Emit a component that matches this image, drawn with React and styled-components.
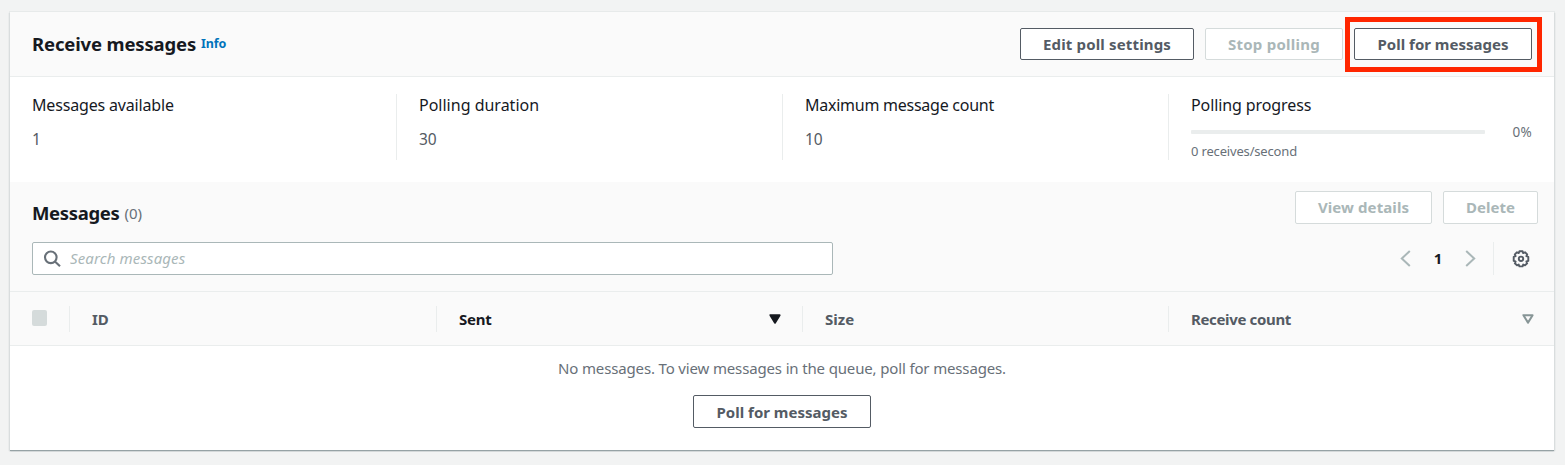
import React from "react";
import styled, { createGlobalStyle, css } from "styled-components";

const GlobalStyle = createGlobalStyle`
  *, *::before, *::after { box-sizing: border-box; }
  body {
    margin: 0;
    background: #f2f3f3;
    font-family: "Noto Sans", "Open Sans", sans-serif;
    font-size: 15px;
    color: #16191f;
  }
  h2, p { margin: 0; }
`;

const Page = styled.main`
  height: 465px;
  padding: 12px 11px 15px 10px;
`;

const Panel = styled.section`
  display: flex;
  flex-direction: column;
  height: 438px;
  background: #fff;
  box-shadow: 0 1px 1px 0 rgba(0, 28, 36, 0.35), 0 0 0 1px #e7eaea,
    0 1px 0 0 #879596, 1px 1px 1px 0 rgba(0, 28, 36, 0.2),
    -1px 1px 1px 0 rgba(0, 28, 36, 0.2);
`;

const PanelHeader = styled.header`
  display: flex;
  align-items: center;
  justify-content: space-between;
  height: 65px;
  padding: 0 22px;
  background: #fafafa;
  border-bottom: 1px solid #eaeded;
`;

const TitleGroup = styled.div`
  display: flex;
  align-items: baseline;
  gap: 5px;
`;

const Title = styled.h2`
  font-size: 18.5px;
  font-weight: 700;
  line-height: 24px;
  letter-spacing: ${(p) => p.$tracking}px;
`;

const InfoLink = styled.a`
  position: relative;
  top: -3px;
  color: #0073bb;
  font-size: 12.5px;
  font-weight: 700;
  letter-spacing: -0.15px;
`;

const Counter = styled.span`
  color: #687078;
  font-size: 15px;
`;

const ButtonRow = styled.div`
  display: flex;
  gap: 11px;
`;

const Button = styled.button`
  width: ${(p) => p.$width}px;
  height: ${(p) => (p.$tall ? 33 : 32)}px;
  padding: ${(p) => (p.$tall && p.disabled ? "0 0 1px" : "0")};
  background: #fff;
  border: 1px solid #545b64;
  border-radius: 2px;
  color: #545b64;
  font: 700 15px/20px "Noto Sans", "Open Sans", sans-serif;
  letter-spacing: ${(p) => p.$tracking || 0}px;
  white-space: nowrap;
  &:disabled {
    border-color: #d5dbdb;
    color: #aab7b8;
  }
`;

const Highlight = styled.div`
  position: relative;
  display: flex;
  &::after {
    content: "";
    position: absolute;
    inset: -11px -10px -12px -9px;
    border: 5px solid #ff2600;
    pointer-events: none;
  }
`;

const Stats = styled.div`
  display: grid;
  grid-template-columns: repeat(4, 386px);
  height: 105px;
  padding-top: 17px;
`;

const Stat = styled.div`
  height: 66px;
  padding: 0 22px;
  & + & {
    border-left: 1px solid #eaeded;
  }
`;

const StatLabel = styled.p`
  font-size: 16px;
  line-height: 22px;
  letter-spacing: ${(p) => p.$tracking}px;
`;

const StatValue = styled.p`
  margin-top: 12px;
  color: #545b64;
  font-size: 15.5px;
  line-height: 22px;
`;

const Progress = styled.div`
  display: flex;
  align-items: center;
  justify-content: space-between;
  height: 20px;
  margin-top: 6px;
  color: #687078;
  font-size: 13.5px;
  letter-spacing: 0.3px;
`;

const ProgressTrack = styled.div`
  width: 294px;
  height: 4px;
  border-radius: 1px;
  background: #eaeded;
`;

const ProgressNote = styled.p`
  color: #687078;
  font-size: 13px;
  line-height: 18px;
  letter-spacing: -0.17px;
`;

const TableTools = styled.div`
  height: 110px;
  padding: 9px 16px 0 22px;
  background: #fafafa;
  border-bottom: 1px solid #eaeded;
`;

const ToolRow = styled.div`
  display: flex;
  align-items: center;
  justify-content: space-between;
  height: 33px;
  & + & {
    margin-top: 18px;
  }
`;

const TableTitle = styled(TitleGroup)`
  padding-top: 11px;
`;

const TableCounter = styled(Counter)`
  position: relative;
  top: -1px;
`;

const SearchBox = styled.label`
  display: flex;
  align-items: center;
  gap: 9px;
  width: 801px;
  height: 33px;
  padding-left: 10px;
  background: #fff;
  border: 1px solid #aab7b8;
  border-radius: 2px;
`;

const SearchInput = styled.input`
  flex: 1;
  padding: 0 0 2px;
  border: 0;
  outline: 0;
  background: none;
  font: italic 400 15px/20px "Noto Sans", "Open Sans", sans-serif;
  letter-spacing: 0.13px;
  &::placeholder {
    color: #aab7b8;
    opacity: 1;
  }
`;

const Pager = styled.nav`
  display: flex;
  align-items: center;
  height: 33px;
  padding-right: 8px;
`;

const PageNumber = styled.span`
  width: 54px;
  padding-bottom: 2px;
  text-align: center;
  font-weight: 700;
  font-size: 15px;
  line-height: 20px;
`;

const Settings = styled.div`
  display: flex;
  align-items: center;
  height: 33px;
  margin-left: 17px;
  padding-left: 18px;
  border-left: 1px solid #eaeded;
`;

const HeadRow = styled.div`
  display: grid;
  grid-template-columns: 59px 367px 366px 366px 386px;
  align-items: center;
  height: 54px;
  background: #fafafa;
  border-bottom: 1px solid #eaeded;
`;

const HeadCell = styled.div`
  display: flex;
  align-items: center;
  justify-content: space-between;
  height: 26px;
  padding: 0 20px 0 22px;
  color: ${(p) => (p.$active ? "#16191f" : "#545b64")};
  font-size: 15px;
  font-weight: 700;
  letter-spacing: ${(p) => p.$tracking || 0}px;
  ${(p) =>
    !p.$first &&
    css`
      border-left: 1px solid #eaeded;
    `}
`;

const Checkbox = styled.span`
  width: 15px;
  height: 16px;
  margin-top: -2px;
  border-radius: 2px;
  background: #d5dbdb;
`;

const Empty = styled.div`
  display: flex;
  flex-direction: column;
  align-items: center;
  gap: 16px;
  padding-top: 11px;
`;

const EmptyText = styled.p`
  color: #687078;
  line-height: 22px;
  letter-spacing: -0.15px;
`;

const Icon = styled.svg`
  display: block;
  flex: none;
  fill: none;
  stroke: ${(p) => p.$color};
`;

const SearchIcon = () => (
  <Icon $color="#687078" width="18" height="18" viewBox="0 0 18 18" strokeWidth="2.1">
    <circle cx="7.8" cy="7.3" r="5.8" />
    <path d="M11.9 11.4L17 16.3" />
  </Icon>
);

const Chevron = ({ right }) => (
  <Icon $color="#aab7b8" width="11" height="17" viewBox="0 0 11 17" strokeWidth="2">
    <path d={right ? "M1.2 1L9.2 8.5L1.2 16" : "M9.8 1L1.8 8.5L9.8 16"} />
  </Icon>
);

const GearIcon = () => (
  <Icon
    $color="#545b64"
    width="18"
    height="18"
    viewBox="0 0 18 18"
    strokeWidth="1.9"
    strokeLinejoin="round"
  >
    <path d="M7.4 1h3.2l.6 1.8 1.8-.8 2.2 2.1-.8 1.8 1.9.7v4l-1.9.6.8 1.8-2.2 2-1.8-.7-.6 1.8H7.4l-.7-1.8-1.7.7-2.2-2 .8-1.8-1.9-.6v-4l1.9-.7-.8-1.8L5 2l1.7.8z" transform="translate(0 .3)" />
    <circle cx="9" cy="8.8" r="2.2" strokeWidth="1.9" />
  </Icon>
);

const SortIcon = ({ active }) => (
  <Icon
    $color={active ? "#16191f" : "#879596"}
    width="12"
    height="10"
    viewBox="0 0 12 10"
    strokeWidth="2"
    strokeLinejoin="round"
  >
    <path d="M1.4 1.2h9.2L6 8.6z" fill={active ? "#16191f" : "none"} />
  </Icon>
);

const SortSlot = styled.span`
  margin-right: ${(p) => p.$offset}px;
`;

export default function App() {
  return (
    <>
      <GlobalStyle />
      <Page>
        <Panel>
          <PanelHeader>
            <TitleGroup>
              <Title $tracking={-0.15}>Receive messages</Title>
              <InfoLink>Info</InfoLink>
            </TitleGroup>
            <ButtonRow>
              <Button $width={174} $tracking={0.16}>Edit poll settings</Button>
              <Button $width={138} $tracking={0.25} disabled>Stop polling</Button>
              <Highlight>
                <Button $width={178}>Poll for messages</Button>
              </Highlight>
            </ButtonRow>
          </PanelHeader>

          <Stats>
            <Stat>
              <StatLabel $tracking={-0.17}>Messages available</StatLabel>
              <StatValue>1</StatValue>
            </Stat>
            <Stat>
              <StatLabel $tracking={0}>Polling duration</StatLabel>
              <StatValue>30</StatValue>
            </Stat>
            <Stat>
              <StatLabel $tracking={-0.25}>Maximum message count</StatLabel>
              <StatValue>10</StatValue>
            </Stat>
            <Stat>
              <StatLabel $tracking={-0.1}>Polling progress</StatLabel>
              <Progress>
                <ProgressTrack />
                <span>0%</span>
              </Progress>
              <ProgressNote>0 receives/second</ProgressNote>
            </Stat>
          </Stats>

          <TableTools>
            <ToolRow>
              <TableTitle>
                <Title $tracking={-0.35}>Messages</Title>
                <TableCounter>(0)</TableCounter>
              </TableTitle>
              <ButtonRow>
                <Button $tall $width={137} $tracking={0.1} disabled>View details</Button>
                <Button $tall $width={95} disabled>Delete</Button>
              </ButtonRow>
            </ToolRow>
            <ToolRow>
              <SearchBox>
                <SearchIcon />
                <SearchInput placeholder="Search messages" />
              </SearchBox>
              <Pager>
                <Chevron />
                <PageNumber>1</PageNumber>
                <Chevron right />
                <Settings>
                  <GearIcon />
                </Settings>
              </Pager>
            </ToolRow>
          </TableTools>

          <HeadRow>
            <HeadCell $first>
              <Checkbox />
            </HeadCell>
            <HeadCell>ID</HeadCell>
            <HeadCell $active $tracking={-0.2}>
              Sent
              <SortSlot $offset={1}><SortIcon active /></SortSlot>
            </HeadCell>
            <HeadCell>Size</HeadCell>
            <HeadCell $tracking={-0.35}>
              Receive count
              <SortSlot $offset={0}><SortIcon /></SortSlot>
            </HeadCell>
          </HeadRow>

          <Empty>
            <EmptyText>No messages. To view messages in the queue, poll for messages.</EmptyText>
            <Button $tall $width={178}>Poll for messages</Button>
          </Empty>
        </Panel>
      </Page>
    </>
  );
}
